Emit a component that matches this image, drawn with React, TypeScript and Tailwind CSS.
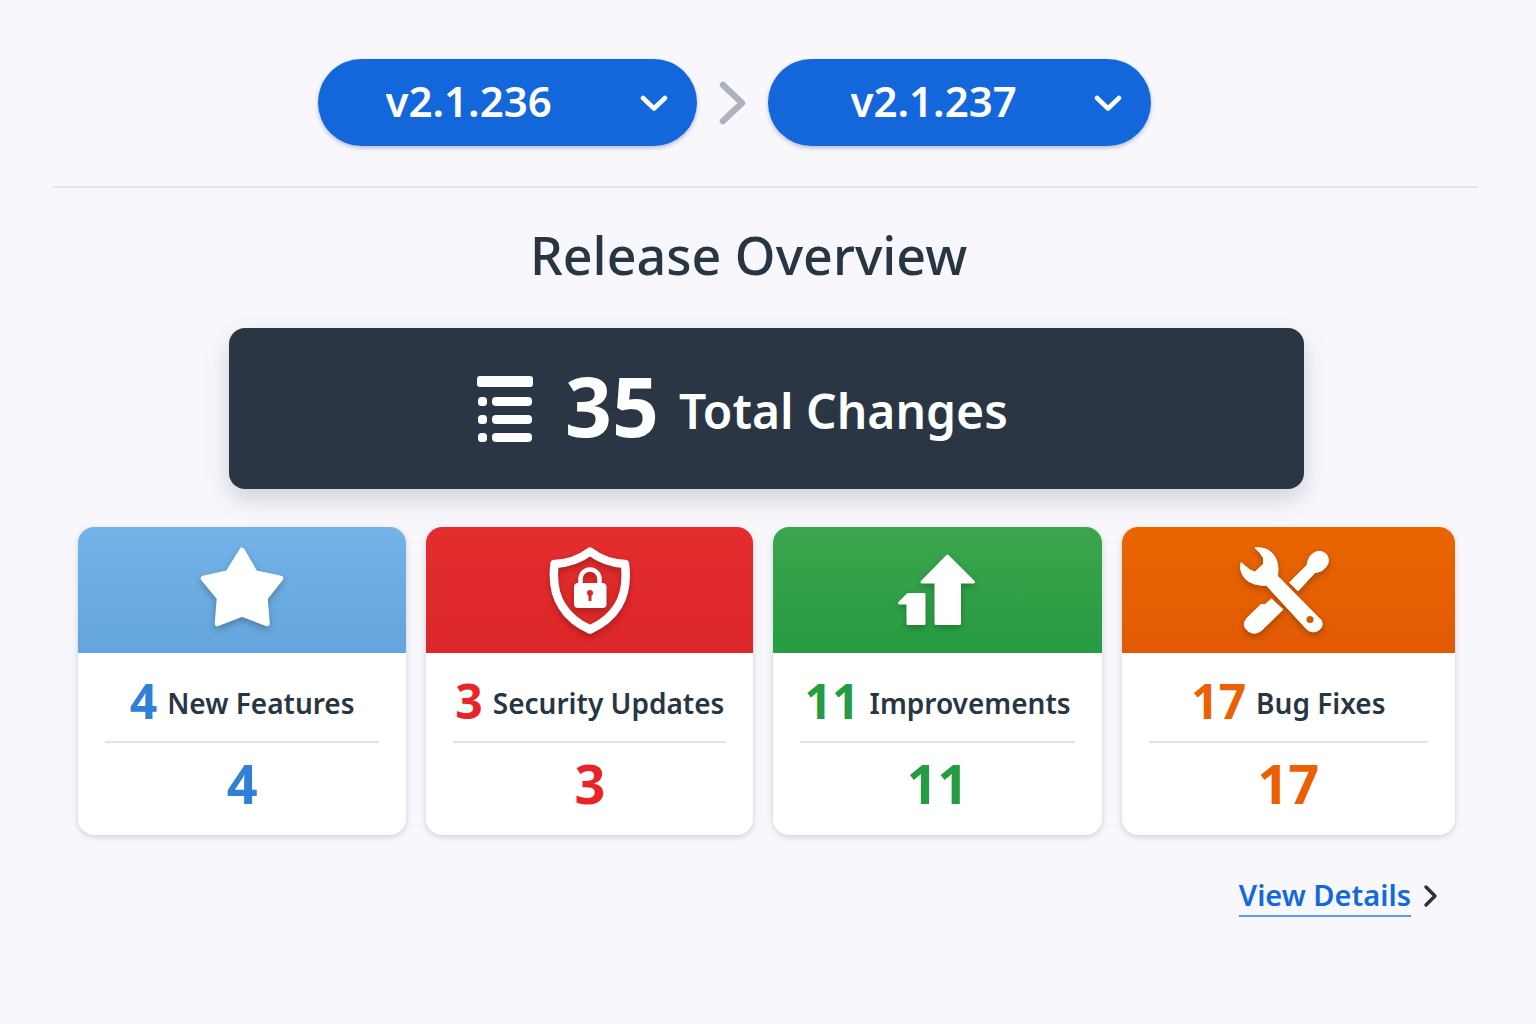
import React, { useState } from 'react';

const versions = ['v2.1.235', 'v2.1.236', 'v2.1.237'];

const StarIcon = () => (
    <svg width="120" height="120" viewBox="2 0 120 120" aria-hidden="true">
        <path
            d="M62 20.5 L75 43 L100.5 48.5 L85 68 L87 93.5 L62 84 L37.5 93.5 L39.5 68 L23.5 48.5 L48 43 Z"
            fill="white"
            stroke="white"
            strokeWidth="5.5"
            strokeLinejoin="round"
        />
    </svg>
);

const ShieldIcon = () => (
    <svg width="120" height="120" viewBox="0 0 120 120" aria-hidden="true">
        <path
            d="M60 21.5 Q75 33 95 34 Q98 60 88 76 Q79 91 60 99.5 Q41 91 32 76 Q21.5 60 24.5 34 Q45 33 60 21.5 Z"
            fill="none"
            stroke="white"
            strokeWidth="8.5"
            strokeLinejoin="round"
        />
        <path
            d="M50.5 56 V49 A9.5 9.5 0 0 1 69.5 49 V56"
            fill="none"
            stroke="white"
            strokeWidth="4.5"
        />
        <rect x="44" y="53" width="32.5" height="25" rx="4" fill="white" />
        <circle cx="60" cy="63" r="3" fill="#dc2626" />
        <path d="M60 64 V71" stroke="#dc2626" strokeWidth="3" />
    </svg>
);

const GrowthIcon = () => (
    <svg width="120" height="120" viewBox="-2 0 120 120" aria-hidden="true">
        <g
            fill="white"
            stroke="white"
            strokeWidth="3"
            strokeLinejoin="round"
        >
            <path d="M67.5 26 L93.5 52 H79.5 V93.5 H56 V52 H42 Z" />
            <path d="M28 64.5 H44 V93.5 H28 V73 H19.5 L28 64.5 Z" />
        </g>
    </svg>
);

const ToolsIcon = () => (
    <svg width="130" height="120" viewBox="3 0 130 120" aria-hidden="true">
        <g fill="white" stroke="white" strokeLinejoin="round">
            <path d="M69.5 52.5 L87 35 Q88 27 93 23.5 Q100 19 106 24 Q111 30 106 37 Q102 42 95 42.5 L78 61 Z" />
            <path d="M51.5 69 L63 79.500 L42 100 Q35 106 28 101 Q21 95 27 88 L41 74.5 H45 Z" />
            <path d="M35 17.8 Q46 17 52 23 Q60 32 57.5 46 L101 90 Q104 96 99 100 Q93 104 87 99.5 L46.5 55.5 Q32 55.5 25 48.500 Q19 41 21 32.5 L30 40 L35 42 L43.5 34 L43.5 28 Q40 22 35 17.8 Z" />
        </g>
        <circle cx="90" cy="89.5" r="3.5" fill="#dc5600" />
    </svg>
);

const ListIcon = () => (
    <svg
        width="56"
        height="68"
        viewBox="0 0 56 68"
        fill="white"
        aria-hidden="true"
    >
        <rect x="0" y="1" width="56" height="11" rx="3" />
        {[22, 40, 58].map((y) => (
            <g key={y}>
                <rect x="1" y={y} width="9" height="9" rx="3.5" />
                <rect x="15" y={y} width="40" height="9" rx="4" />
            </g>
        ))}
    </svg>
);

const cards = [
    {
        label: 'New Features',
        count: 4,
        icon: <StarIcon />,
        header: 'bg-linear-to-b from-[#73b3e8] to-[#64a4dc]',
        number: 'text-[#2f80d6]'
    },
    {
        label: 'Security Updates',
        count: 3,
        icon: <ShieldIcon />,
        header: 'bg-linear-to-b from-[#e42d2d] to-[#dd2628]',
        number: 'text-[#e92429]'
    },
    {
        label: 'Improvements',
        count: 11,
        icon: <GrowthIcon />,
        header: 'bg-linear-to-b from-[#3ba54d] to-[#269b42]',
        number: 'text-[#249c41]'
    },
    {
        label: 'Bug Fixes',
        count: 17,
        icon: <ToolsIcon />,
        header: 'bg-linear-to-b from-[#e96500] to-[#e25a05]',
        number: 'text-[#ed5f05]'
    }
];

const VersionSelect = ({
    label,
    value,
    onChange,
    className
}: {
    label: string;
    value: string;
    onChange: (value: string) => void;
    className: string;
}) => (
    <div className="relative">
        <select
            aria-label={label}
            value={value}
            onChange={(e) => onChange(e.target.value)}
            className={`h-[87px] appearance-none rounded-full bg-[#1367da] pb-1 text-[42px] font-semibold text-white shadow-[0_2px_4px_rgba(30,50,110,0.3)] ${className}`}
        >
            {versions.map((version) => (
                <option key={version} value={version}>
                    {version}
                </option>
            ))}
        </select>
        <svg
            className="pointer-events-none absolute top-9 right-[27px]"
            width="32"
            height="18"
            viewBox="0 0 32 18"
            fill="none"
            stroke="white"
            strokeWidth="4.5"
            strokeLinecap="round"
            strokeLinejoin="round"
            aria-hidden="true"
        >
            <path d="M5 3 L16 13.5 L27 3" />
        </svg>
    </div>
);

const App = () => {
    const [fromVersion, setFromVersion] = useState('v2.1.236');
    const [toVersion, setToVersion] = useState('v2.1.237');

    const total = cards.reduce((sum, card) => sum + card.count, 0);

    return (
        <div className="min-h-screen bg-[#f8f8fc] font-['Noto_Sans','Open_Sans',sans-serif] text-[#283543]">
            <header className="mr-[58px] ml-[53px] flex items-center justify-center border-b-2 border-[#e3e5ea] pt-[59px] pr-[63px] pb-10">
                <VersionSelect
                    label="From version"
                    value={fromVersion}
                    onChange={setFromVersion}
                    className="w-[379px] pl-[68px]"
                />
                <svg
                    className="mx-5"
                    width="31"
                    height="46"
                    viewBox="0 0 31 46"
                    fill="none"
                    stroke="#adb3bd"
                    strokeWidth="6.5"
                    strokeLinecap="round"
                    strokeLinejoin="round"
                    aria-hidden="true"
                >
                    <path d="M6 5 L25 23 L6 41" />
                </svg>
                <VersionSelect
                    label="To version"
                    value={toVersion}
                    onChange={setToVersion}
                    className="w-[383px] pl-[83px]"
                />
            </header>

            <main className="pr-[81px] pb-12 pl-[78px]">
                <h1 className="pt-8 pr-9 text-center text-[52px] leading-[70px] font-medium">
                    Release Overview
                </h1>

                <section className="mx-auto mt-[38px] flex h-[161px] w-[78%] items-center justify-center rounded-2xl bg-[#2b3644] pr-12 text-white shadow-[0_10px_24px_rgba(40,53,80,0.2)]">
                    <ListIcon />
                    <span className="mb-2 ml-8 text-[82px] leading-none font-bold">
                        {total}
                    </span>
                    <span className="mt-1 ml-5 text-[48px] leading-none font-semibold">
                        Total Changes
                    </span>
                </section>

                <section className="mt-[38px] grid grid-cols-[328fr_327fr_328fr_333fr] gap-5">
                    {cards.map((card) => (
                        <article
                            key={card.label}
                            className="overflow-hidden rounded-2xl bg-white text-center shadow-[0_2px_6px_rgba(40,53,90,0.2)]"
                        >
                            <div
                                className={`flex h-[126px] items-center justify-center ${card.header}`}
                            >
                                <div className="drop-shadow-[0_3px_3px_rgba(0,0,0,0.25)]">
                                    {card.icon}
                                </div>
                            </div>
                            <div className="mx-[27px] flex h-[90px] items-center justify-center gap-[10px] border-b-2 border-[#e3e4ea] pt-2 whitespace-nowrap">
                                <span
                                    className={`text-[48px] leading-none font-bold ${card.number}`}
                                >
                                    {card.count}
                                </span>
                                <h2 className="pt-1 text-[28px] leading-none font-semibold">
                                    {card.label}
                                </h2>
                            </div>
                            <p
                                className={`pt-[10px] pb-[22px] text-[54px] leading-[60px] font-bold ${card.number}`}
                            >
                                {card.count}
                            </p>
                        </article>
                    ))}
                </section>

                <div className="mt-10 flex justify-end pr-4">
                    <a
                        href="#details"
                        className="flex items-center gap-3 text-[29px] leading-10 font-semibold text-[#1269dc]"
                    >
                        <span className="border-b-2 border-[#5c9df0]">
                            View Details
                        </span>
                        <svg
                            width="16"
                            height="24"
                            viewBox="0 0 16 24"
                            fill="none"
                            stroke="#283543"
                            strokeWidth="3.5"
                            strokeLinecap="round"
                            strokeLinejoin="round"
                            aria-hidden="true"
                        >
                            <path d="M3 3 L12 12 L3 21" />
                        </svg>
                    </a>
                </div>
            </main>
        </div>
    );
};

export default App;
